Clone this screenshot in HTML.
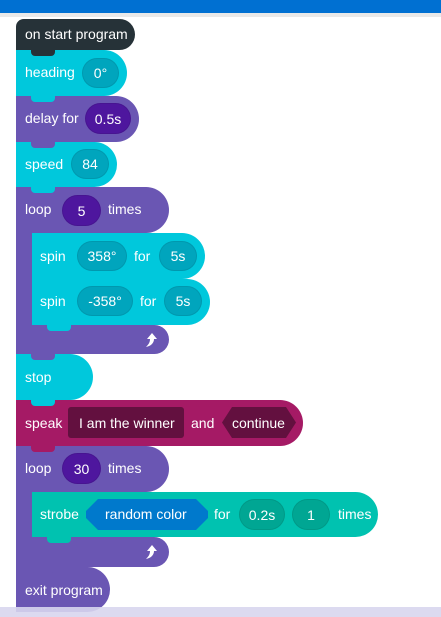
<!DOCTYPE html>
<html><head><meta charset="utf-8"><style>
body{margin:0;width:441px;height:617px;overflow:hidden;background:#fff;font-family:"Liberation Sans",sans-serif;position:relative}
.b{position:absolute;left:16px;color:#fff;font-size:14px;border-radius:0 23px 23px 0;box-sizing:border-box}
.t{position:absolute;white-space:nowrap;color:#fff;font-size:14px}
.p{position:absolute;border-radius:16px;color:#fff;font-size:14px;display:flex;align-items:center;justify-content:center;box-sizing:border-box;border:1px solid rgba(0,0,0,.08)}
.n{position:absolute;height:6px;width:24px;border-radius:0 0 4px 4px}
</style></head><body>
<div style="position:absolute;left:0;top:0;width:441px;height:13px;background:#0070d2"></div>
<div style="position:absolute;left:0;top:13px;width:441px;height:4px;background:#e9e9e9"></div>

<div class="b" style="top:19px;width:119px;height:31px;background:#263238;border-radius:8px 16px 16px 0;z-index:10"></div>
<div class="n" style="left:31px;top:50px;background:#263238;z-index:10"></div>
<div class="t" style="left:25px;top:26px;z-index:11">on start program</div>

<div class="b" style="top:50px;width:111px;height:46px;background:#00c8dc;z-index:9"></div>
<div class="n" style="left:31px;top:96px;background:#00c8dc;z-index:9"></div>
<div class="t" style="left:25px;top:64px;z-index:9">heading</div>
<div class="p" style="left:82px;top:58px;width:37px;height:30px;background:#00a5bd;z-index:9">0°</div>

<div class="b" style="top:96px;width:123px;height:46px;background:#6a56b3;z-index:8"></div>
<div class="n" style="left:31px;top:142px;background:#6a56b3;z-index:8"></div>
<div class="t" style="left:25px;top:110px;z-index:8">delay for</div>
<div class="p" style="left:85px;top:103px;width:46px;height:31px;background:#4e169e;z-index:8">0.5s</div>

<div class="b" style="top:142px;width:101px;height:45px;background:#00c8dc;z-index:7"></div>
<div class="n" style="left:31px;top:187px;background:#00c8dc;z-index:7"></div>
<div class="t" style="left:25px;top:156px;z-index:7">speed</div>
<div class="p" style="left:71px;top:149px;width:38px;height:30px;background:#00a5bd;z-index:7">84</div>

<div class="b" style="top:187px;width:153px;height:46px;background:#6a56b3;z-index:6"></div>
<div style="position:absolute;left:16px;top:225px;width:16px;height:110px;background:#6a56b3;z-index:6"></div>
<div class="t" style="left:25px;top:201px;z-index:6">loop</div>
<div class="p" style="left:62px;top:195px;width:39px;height:31px;background:#4e169e;z-index:6">5</div>
<div class="t" style="left:108px;top:201px;z-index:6">times</div>
<div class="b" style="left:32px;top:233px;width:173px;height:46px;background:#00c8dc;z-index:6"></div>
<div class="n" style="left:47px;top:279px;background:#00c8dc;z-index:6"></div>
<div class="t" style="left:40px;top:248px;z-index:6">spin</div>
<div class="p" style="left:77px;top:241px;width:50px;height:30px;background:#00a5bd;z-index:6">358°</div>
<div class="t" style="left:134px;top:248px;z-index:6">for</div>
<div class="p" style="left:159px;top:241px;width:38px;height:30px;background:#00a5bd;z-index:6">5s</div>
<div class="b" style="left:32px;top:279px;width:178px;height:46px;background:#00c8dc;z-index:5"></div>
<div class="n" style="left:47px;top:325px;background:#00c8dc;z-index:6"></div>
<div class="t" style="left:40px;top:293px;z-index:5">spin</div>
<div class="p" style="left:77px;top:286px;width:56px;height:30px;background:#00a5bd;z-index:5">-358°</div>
<div class="t" style="left:140px;top:293px;z-index:5">for</div>
<div class="p" style="left:164px;top:286px;width:38px;height:30px;background:#00a5bd;z-index:5">5s</div>
<div class="b" style="top:325px;width:153px;height:29px;background:#6a56b3;border-radius:0 15px 15px 0;z-index:4"></div>
<div class="n" style="left:31px;top:354px;background:#6a56b3;z-index:4"></div>
<svg style="position:absolute;left:144px;top:332px;z-index:4" width="14" height="16" viewBox="0 0 14 16"><path d="M8 1 L13 7 L10 7 C10 11 7 14 2 15 C5 12 6 10 6 7 L3 7 Z" fill="#fff"/></svg>

<div class="b" style="top:354px;width:77px;height:46px;background:#00c8dc;z-index:3"></div>
<div class="n" style="left:31px;top:400px;background:#00c8dc;z-index:3"></div>
<div class="t" style="left:25px;top:369px;z-index:3">stop</div>

<div class="b" style="top:400px;width:287px;height:46px;background:#a51a65;z-index:2"></div>
<div class="n" style="left:31px;top:446px;background:#a51a65;z-index:2"></div>
<div class="t" style="left:25px;top:415px;z-index:2">speak</div>
<div style="position:absolute;left:68px;top:407px;width:116px;height:31px;background:#63103f;border-radius:3px;z-index:2"></div>
<div class="t" style="left:79px;top:415px;z-index:2">I am the winner</div>
<div class="t" style="left:191px;top:415px;z-index:2">and</div>
<svg style="position:absolute;left:222px;top:407px;z-index:2" width="74" height="31"><polygon points="10,0 64,0 74,15.5 64,31 10,31 0,15.5" fill="#63103f"/></svg>
<div class="t" style="left:232px;top:415px;z-index:2">continue</div>

<div class="b" style="top:446px;width:153px;height:46px;background:#6a56b3;z-index:1"></div>
<div style="position:absolute;left:16px;top:485px;width:16px;height:60px;background:#6a56b3;z-index:1"></div>
<div class="t" style="left:25px;top:460px;z-index:1">loop</div>
<div class="p" style="left:62px;top:453px;width:39px;height:31px;background:#4e169e;z-index:1">30</div>
<div class="t" style="left:108px;top:460px;z-index:1">times</div>
<div class="b" style="left:32px;top:492px;width:346px;height:45px;background:#00c2b0;z-index:1"></div>
<div class="n" style="left:47px;top:537px;background:#00c2b0;z-index:2"></div>
<div class="t" style="left:40px;top:506px;z-index:1">strobe</div>
<svg style="position:absolute;left:86px;top:499px;z-index:1" width="122" height="31"><polygon points="12,0 110,0 122,12 122,19 110,31 12,31 0,19 0,12" fill="#0079cc"/></svg>
<div class="t" style="left:105px;top:506px;z-index:1">random color</div>
<div class="t" style="left:214px;top:506px;z-index:1">for</div>
<div class="p" style="left:239px;top:499px;width:46px;height:31px;background:#00a693;z-index:1">0.2s</div>
<div class="p" style="left:292px;top:499px;width:38px;height:31px;background:#00a693;z-index:1">1</div>
<div class="t" style="left:338px;top:506px;z-index:1">times</div>
<div class="b" style="top:537px;width:153px;height:30px;background:#6a56b3;border-radius:0 15px 15px 0;z-index:0"></div>
<div class="n" style="left:31px;top:567px;background:#6a56b3;z-index:1"></div>
<svg style="position:absolute;left:144px;top:544px;z-index:1" width="14" height="16" viewBox="0 0 14 16"><path d="M8 1 L13 7 L10 7 C10 11 7 14 2 15 C5 12 6 10 6 7 L3 7 Z" fill="#fff"/></svg>

<div class="b" style="top:567px;width:94px;height:45px;background:#6a56b3;z-index:0"></div>
<div class="t" style="left:25px;top:582px;z-index:1">exit program</div>
<div style="position:absolute;left:0;top:607px;width:441px;height:10px;background:#d8d6ee;opacity:.9;z-index:3"></div>
</body></html>
